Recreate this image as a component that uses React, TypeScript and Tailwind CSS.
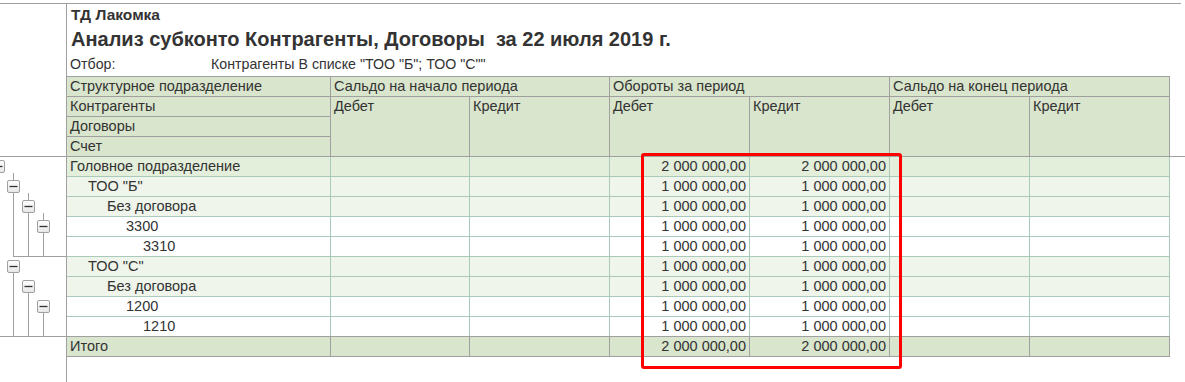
import React from "react";

type Row = { label: string; pad: string; bg: string; v: string };

const rows: Row[] = [
  { label: "Головное подразделение", pad: "pl-[3px]", bg: "bg-[#e3eedb]", v: "2 000 000,00" },
  { label: 'ТОО "Б"', pad: "pl-[21px]", bg: "bg-[#eff5ea]", v: "1 000 000,00" },
  { label: "Без договора", pad: "pl-[40px]", bg: "bg-[#eff5ea]", v: "1 000 000,00" },
  { label: "3300", pad: "pl-[59px]", bg: "bg-white", v: "1 000 000,00" },
  { label: "3310", pad: "pl-[76px]", bg: "bg-white", v: "1 000 000,00" },
  { label: 'ТОО "С"', pad: "pl-[21px]", bg: "bg-[#eff5ea]", v: "1 000 000,00" },
  { label: "Без договора", pad: "pl-[40px]", bg: "bg-[#eff5ea]", v: "1 000 000,00" },
  { label: "1200", pad: "pl-[59px]", bg: "bg-white", v: "1 000 000,00" },
  { label: "1210", pad: "pl-[76px]", bg: "bg-white", v: "1 000 000,00" },
];

function MinusBox({ x, y }: { x: number; y: number }) {
  return (
    <g>
      <rect x={x + 0.5} y={y + 0.5} width={12} height={12} rx={1.5} fill="url(#bx)" stroke="#a0a0a0" />
      <line x1={x + 2.5} y1={y + 6.5} x2={x + 10.5} y2={y + 6.5} stroke="#333" strokeWidth={1.3} />
    </g>
  );
}

function Tree() {
  const c = "#a0a0a0";
  return (
    <svg width="66" height="179" className="block">
      <defs>
        <linearGradient id="bx" x1="0" y1="0" x2="0" y2="1">
          <stop offset="0" stopColor="#ffffff" />
          <stop offset="1" stopColor="#e6e6e6" />
        </linearGradient>
      </defs>
      <line x1={13.5} y1={16} x2={13.5} y2={99.5} stroke={c} />
      <line x1={28.5} y1={36} x2={28.5} y2={99.5} stroke={c} />
      <line x1={43.5} y1={56} x2={43.5} y2={99.5} stroke={c} />
      <line x1={13} y1={99.5} x2={66} y2={99.5} stroke={c} />
      <line x1={13.5} y1={116} x2={13.5} y2={179} stroke={c} />
      <line x1={28.5} y1={136} x2={28.5} y2={179} stroke={c} />
      <line x1={43.5} y1={156} x2={43.5} y2={179} stroke={c} />
      <MinusBox x={-8} y={3} />
      <MinusBox x={7} y={23} />
      <MinusBox x={22} y={43} />
      <MinusBox x={37} y={63} />
      <MinusBox x={7} y={103} />
      <MinusBox x={22} y={123} />
      <MinusBox x={37} y={143} />
    </svg>
  );
}

const hc = "border-r border-b border-[#a0a0a0] pl-[3px] leading-[19px] whitespace-nowrap overflow-hidden";

export default function App() {
  return (
    <div className="relative w-[1185px] h-[382px] overflow-hidden bg-white text-[#333333] font-['Liberation_Sans',Arial,sans-serif] text-[14.5px] flex flex-col">
      <div className="mt-[3px] w-[1181px] border-t border-[#a0a0a0]" />
      {/* title */}
      <div className="flex h-[72px] shrink-0">
        <div className="w-[67px] shrink-0 border-r border-[#a0a0a0]" />
        <div className="pl-[4px] flex flex-col">
          <div className="h-[22px] leading-[22px] text-[15.5px] font-bold">ТД Лакомка</div>
          <div className="h-[26px] leading-[26px] text-[20px] font-bold whitespace-pre">
            Анализ субконто Контрагенты, Договоры  за 22 июля 2019 г.
          </div>
          <div className="h-[24px] leading-[24px] flex -ml-[1px] whitespace-pre text-[14.2px]">
            <span className="w-[141px]">Отбор:</span>
            <span>Контрагенты В списке "ТОО "Б"; ТОО "С""</span>
          </div>
        </div>
      </div>
      {/* header */}
      <div className="flex shrink-0">
        <div className="w-[67px] h-[81px] shrink-0 border-r border-b border-[#a0a0a0]" />
        <div className="grid grid-cols-[264px_139px_140px_140px_140px_140px_140px] grid-rows-[20px_20px_20px_20px] border-t border-[#a0a0a0] bg-[#d9e5cc]">
          <div className={`${hc} col-start-1 row-start-1`}>Структурное подразделение</div>
          <div className={`${hc} col-start-1 row-start-2`}>Контрагенты</div>
          <div className={`${hc} col-start-1 row-start-3`}>Договоры</div>
          <div className={`${hc} col-start-1 row-start-4`}>Счет</div>
          <div className={`${hc} col-start-2 col-span-2 row-start-1`}>Сальдо на начало периода</div>
          <div className={`${hc} col-start-4 col-span-2 row-start-1`}>Обороты за период</div>
          <div className={`${hc} col-start-6 col-span-2 row-start-1`}>Сальдо на конец периода</div>
          <div className={`${hc} col-start-2 row-start-2 row-span-3`}>Дебет</div>
          <div className={`${hc} col-start-3 row-start-2 row-span-3`}>Кредит</div>
          <div className={`${hc} col-start-4 row-start-2 row-span-3`}>Дебет</div>
          <div className={`${hc} col-start-5 row-start-2 row-span-3`}>Кредит</div>
          <div className={`${hc} col-start-6 row-start-2 row-span-3`}>Дебет</div>
          <div className={`${hc} col-start-7 row-start-2 row-span-3`}>Кредит</div>
        </div>
        <div className="flex-1 h-[81px] border-b border-[#a0a0a0]" />
      </div>
      {/* body */}
      <div className="flex shrink-0">
        <div className="w-[67px] h-[180px] shrink-0 border-r border-b border-[#a0a0a0]">
          <Tree />
        </div>
        <div className="flex flex-col">
          {rows.map((r, i) => (
            <div
              key={i}
              className={`flex h-[20px] border-b ${i === 8 ? "border-[#a0a0a0]" : "border-[#a9c9bb]"} ${r.bg}`}
            >
              <div className={`w-[264px] border-r border-[#a9c9bb] leading-[19px] whitespace-nowrap ${r.pad}`}>{r.label}</div>
              <div className="w-[139px] border-r border-[#a9c9bb]" />
              <div className="w-[140px] border-r border-[#a9c9bb]" />
              <div className="w-[140px] border-r border-[#a9c9bb] text-right pr-[3px] leading-[19px] whitespace-nowrap">{r.v}</div>
              <div className="w-[140px] border-r border-[#a9c9bb] text-right pr-[3px] leading-[19px] whitespace-nowrap">{r.v}</div>
              <div className="w-[140px] border-r border-[#a9c9bb]" />
              <div className="w-[140px] border-r border-[#a9c9bb]" />
            </div>
          ))}
        </div>
      </div>
      {/* total */}
      <div className="flex shrink-0">
        <div className="w-[67px] h-[20px] shrink-0 border-r border-[#a0a0a0]" />
        <div className="flex h-[20px] border-b border-[#a0a0a0] bg-[#d9e5cc]">
          <div className="w-[264px] border-r border-[#a0a0a0] leading-[19px] pl-[3px]">Итого</div>
          <div className="w-[139px] border-r border-[#a0a0a0]" />
          <div className="w-[140px] border-r border-[#a0a0a0]" />
          <div className="w-[140px] border-r border-[#a0a0a0] text-right pr-[3px] leading-[19px] whitespace-nowrap">2 000 000,00</div>
          <div className="w-[140px] border-r border-[#a0a0a0] text-right pr-[3px] leading-[19px] whitespace-nowrap">2 000 000,00</div>
          <div className="w-[140px] border-r border-[#a0a0a0]" />
          <div className="w-[140px] border-r border-[#a0a0a0]" />
        </div>
      </div>
      <div className="flex flex-1">
        <div className="w-[67px] shrink-0 border-r border-[#a0a0a0]" />
      </div>
      {/* annotation */}
      <div className="absolute left-[641px] top-[153px] w-[261px] h-[216px] border-[3px] border-[#ff0000] rounded-[3px]" />
    </div>
  );
}
